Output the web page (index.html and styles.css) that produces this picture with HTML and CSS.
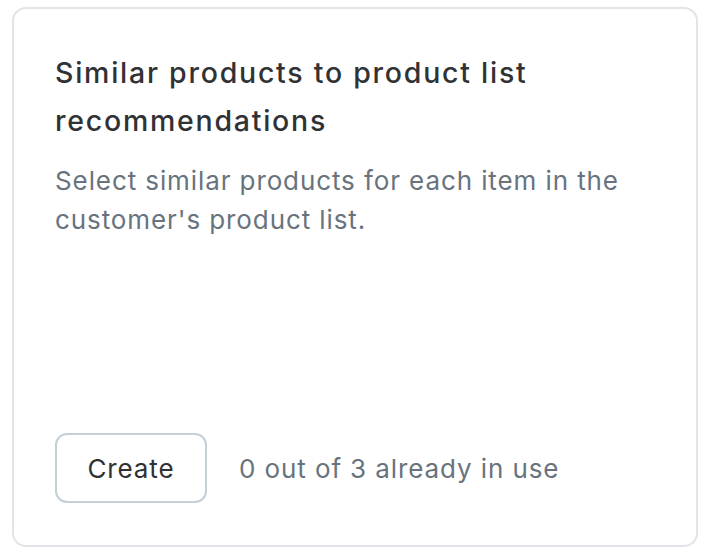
FILE: index.html
```html
<!DOCTYPE html>
<html>
<head>
<meta charset="utf-8">
<link rel="stylesheet" href="styles.css">
</head>
<body>
<div class="card">
  <h2 class="title">Similar products to product list recommendations</h2>
  <p class="desc">Select similar products for each item in the customer's product list.</p>
  <div class="footer">
    <button class="btn">Create</button>
    <span class="usage">0 out of 3 already in use</span>
  </div>
</div>
</body>
</html>
```

FILE: styles.css
```css
html, body {
  margin: 0;
  padding: 0;
  background: #ffffff;
}
body {
  padding: 7px 10px 0 12px;
  font-family: Inter, "Noto Sans", sans-serif;
}
.card {
  box-sizing: border-box;
  height: 540px;
  border: 2px solid #e1e5e9;
  border-radius: 14px;
  padding: 40px 41px 42px 41px;
  display: flex;
  flex-direction: column;
}
.title {
  margin: 0;
  font-size: 28.5px;
  line-height: 48px;
  font-weight: 450;
  letter-spacing: 1.75px;
  color: #303234;
  max-width: 560px;
}
.desc {
  margin: 16px 0 0 0;
  font-size: 26px;
  line-height: 39px;
  letter-spacing: 0.9px;
  color: #68737d;
  max-width: 590px;
}
.footer {
  margin-top: auto;
  display: flex;
  align-items: center;
  gap: 32px;
}
.btn {
  box-sizing: border-box;
  width: 152px;
  height: 70px;
  border: 2px solid #c4cfd6;
  border-radius: 12px;
  background: #fff;
  font-family: inherit;
  font-size: 26px;
  letter-spacing: 0.9px;
  color: #2f3133;
  padding: 0;
}
.usage {
  font-size: 26px;
  letter-spacing: 0.9px;
  color: #68737d;
}
```
